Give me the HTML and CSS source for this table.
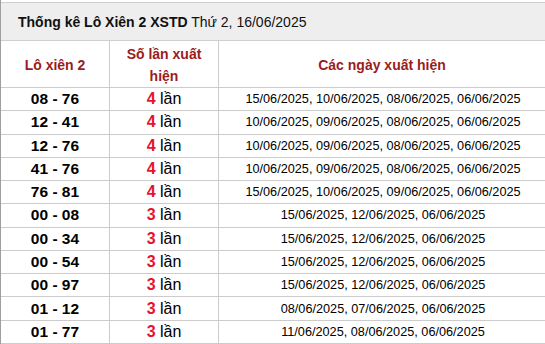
FILE: index.html
```html
<!DOCTYPE html>
<html lang="vi">
<head>
<meta charset="utf-8">
<link rel="stylesheet" href="styles.css">
</head>
<body>
<div class="box">
  <div class="title"><span><b>Thống kê Lô Xiên 2 XSTD</b> Thứ 2, 16/06/2025</span></div>
  <div class="grid">
    <div class="th c1">Lô xiên 2</div>
    <div class="th c2"><span>Số lần xuất<br>hiện</span></div>
    <div class="th c3">Các ngày xuất hiện</div>

    <div class="td c1 pair">08 - 76</div><div class="td c2"><span><b class="n">4</b> lần</span></div><div class="td c3 dates">15/06/2025, 10/06/2025, 08/06/2025, 06/06/2025</div>
    <div class="td c1 pair">12 - 41</div><div class="td c2"><span><b class="n">4</b> lần</span></div><div class="td c3 dates">10/06/2025, 09/06/2025, 08/06/2025, 06/06/2025</div>
    <div class="td c1 pair">12 - 76</div><div class="td c2"><span><b class="n">4</b> lần</span></div><div class="td c3 dates">10/06/2025, 09/06/2025, 08/06/2025, 06/06/2025</div>
    <div class="td c1 pair">41 - 76</div><div class="td c2"><span><b class="n">4</b> lần</span></div><div class="td c3 dates">10/06/2025, 09/06/2025, 08/06/2025, 06/06/2025</div>
    <div class="td c1 pair">76 - 81</div><div class="td c2"><span><b class="n">4</b> lần</span></div><div class="td c3 dates">15/06/2025, 10/06/2025, 09/06/2025, 06/06/2025</div>
    <div class="td c1 pair">00 - 08</div><div class="td c2"><span><b class="n">3</b> lần</span></div><div class="td c3 dates">15/06/2025, 12/06/2025, 06/06/2025</div>
    <div class="td c1 pair">00 - 34</div><div class="td c2"><span><b class="n">3</b> lần</span></div><div class="td c3 dates">15/06/2025, 12/06/2025, 06/06/2025</div>
    <div class="td c1 pair">00 - 54</div><div class="td c2"><span><b class="n">3</b> lần</span></div><div class="td c3 dates">15/06/2025, 12/06/2025, 06/06/2025</div>
    <div class="td c1 pair">00 - 97</div><div class="td c2"><span><b class="n">3</b> lần</span></div><div class="td c3 dates">15/06/2025, 12/06/2025, 06/06/2025</div>
    <div class="td c1 pair">01 - 12</div><div class="td c2"><span><b class="n">3</b> lần</span></div><div class="td c3 dates">08/06/2025, 07/06/2025, 06/06/2025</div>
    <div class="td c1 pair">01 - 77</div><div class="td c2"><span><b class="n">3</b> lần</span></div><div class="td c3 dates">11/06/2025, 08/06/2025, 06/06/2025</div>
  </div>
</div>
</body>
</html>
```
FILE: styles.css
```css
* { box-sizing: border-box; }
html, body { margin: 0; padding: 0; background: #fff; }
body {
  font-family: "Liberation Sans", Arial, sans-serif;
  color: #000;
  width: 545px;
  height: 344px;
  overflow: hidden;
}
.box {
  border-left: 1px solid #9e9e9e;
  padding-top: 2px;
}
.title {
  height: 39px;
  border-top: 1px solid #cfcfcf;
  border-bottom: 1px solid #cfcfcf;
  background: #efeeee;
  font-size: 14px;
  color: #111;
  padding-left: 17px;
  display: flex;
  align-items: center;
  white-space: nowrap;
}
.grid {
  display: grid;
  grid-template-columns: 109px 109px 1fr;
  grid-template-rows: 47px;
  grid-auto-rows: 23.27px;
}
.th, .td {
  border-bottom: 1px solid #cccccc;
  display: flex;
  align-items: center;
  justify-content: center;
  text-align: center;
  white-space: nowrap;
}
.c1, .c2 { border-right: 1px solid #cccccc; }
.th {
  font-size: 14px;
  font-weight: bold;
  color: #9a1c1c;
  line-height: 22px;
  padding-top: 1px;
}
.td { font-size: 16px; }
.pair { font-weight: bold; font-size: 15.5px; }
.n { color: #e5142e; font-weight: bold; }
.dates { font-size: 12.7px; padding-left: 2px; }
```
